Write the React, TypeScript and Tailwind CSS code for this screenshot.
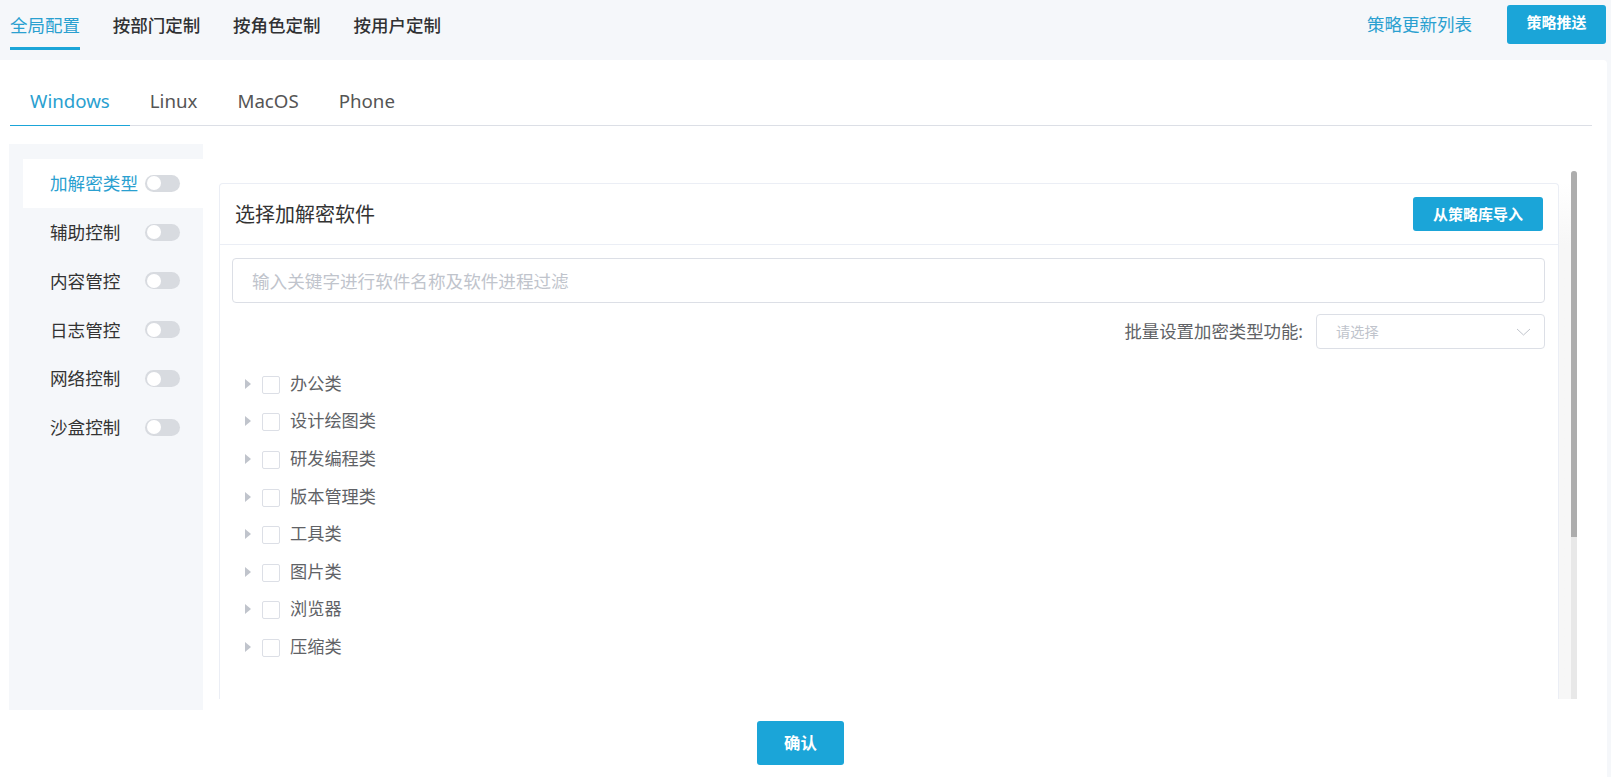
import React from "react";

const font = '"Noto Sans", "Noto Sans CJK SC", sans-serif';
const cats = ["办公类", "设计绘图类", "研发编程类", "版本管理类", "工具类", "图片类", "浏览器", "压缩类"];
const side = ["加解密类型", "辅助控制", "内容管控", "日志管控", "网络控制", "沙盒控制"];
const topTabs = ["全局配置", "按部门定制", "按角色定制", "按用户定制"];
const osTabs = ["Windows", "Linux", "MacOS", "Phone"];

function Toggle() {
  return (
    <span className="flex h-[17px] w-[35px] items-center rounded-full bg-[#d8dbe0] pl-[2px]">
      <span className="h-[14px] w-[14px] rounded-full bg-white" />
    </span>
  );
}

export default function App() {
  return (
    <div className="flex h-screen w-full flex-col overflow-hidden bg-[#f5f7fa]" style={{ fontFamily: font }}>
      <header className="flex h-[60px] shrink-0 items-start justify-between pl-[10px] pr-[5px]">
        <nav className="flex gap-[32.8px]">
          {topTabs.map((t, i) => (
            <div
              key={t}
              className={
                i === 0
                  ? "flex h-[50px] items-center border-b-[3px] border-[#1ba5d8] pt-[3px] text-[17.5px] text-[#2aa0d0]"
                  : "flex h-[50px] items-center border-b-[3px] border-transparent pt-[3px] text-[17.5px] font-medium text-[#303133]"
              }
            >
              {t}
            </div>
          ))}
        </nav>
        <div className="flex items-center gap-[35px] pt-[5px]">
          <span className="text-[17.5px] text-[#2aa0d0]">策略更新列表</span>
          <button className="flex h-[39px] w-[99px] items-center justify-center rounded-[3px] bg-[#1ba5d8] pb-[4px] text-[15px] font-bold text-white">
            策略推送
          </button>
        </div>
      </header>

      <main className="mr-[4px] flex min-h-0 flex-1 flex-col rounded-tr-[4px] bg-white">
        <div className="ml-[10px] mr-[15px] flex h-[66px] shrink-0 items-end border-b border-[#dcdfe6]">
          {osTabs.map((t, i) => (
            <div
              key={t}
              className={
                i === 0
                  ? "-mb-px flex h-[50px] items-center border-b-[1.5px] border-[#1ba5d8] px-[20px] pt-[1px] text-[18.7px] text-[#2aa0d0]"
                  : "-mb-px flex h-[50px] items-center border-b-[1.5px] border-transparent px-[20px] pt-[1px] text-[18.7px] text-[#555]"
              }
            >
              {t}
            </div>
          ))}
        </div>

        <div className="ml-[9px] mt-[18px] flex h-[566px] shrink-0 items-start">
          <aside className="h-full w-[194px] shrink-0 bg-[#f5f7fa] pl-[14px] pt-[15px]">
            {side.map((s, i) => (
              <div
                key={s}
                className={
                  i === 0
                    ? "flex h-[48.8px] items-center bg-white pl-[27px] text-[17.6px] text-[#2aa0d0]"
                    : "flex h-[48.8px] items-center pl-[27px] text-[17.6px] text-[#333]"
                }
              >
                <span className="w-[95px] shrink-0">{s}</span>
                <Toggle />
              </div>
            ))}
          </aside>

          <div className="ml-[16px] mt-[27px] flex h-[528px] min-w-0 flex-1 pr-[30px]">
            <section className="mt-[12px] w-[1340px] shrink-0 overflow-hidden rounded-t-[4px] border border-b-0 border-[#ebeef5]">
              <div className="flex h-[61px] items-center justify-between border-b border-[#ebeef5] pl-[15px] pr-[15px]">
                <h2 className="pt-[2px] text-[20px] font-normal text-[#333]">选择加解密软件</h2>
                <button className="flex h-[34px] w-[130px] items-center justify-center rounded-[3px] bg-[#1ba5d8] text-[15px] font-bold text-white">
                  从策略库导入
                </button>
              </div>
              <div className="pl-[12px] pr-[13px] pt-[13px]">
                <input
                  readOnly
                  placeholder="输入关键字进行软件名称及软件进程过滤"
                  className="h-[45px] w-full rounded-[4px] border border-[#dcdfe6] px-[19px] text-[17.6px] outline-none placeholder:text-[#c0c4cc]"
                />
                <div className="mt-[11px] flex items-center justify-end gap-[13px]">
                  <span className="text-[17.4px] text-[#606266]">批量设置加密类型功能:</span>
                  <div className="flex h-[35px] w-[229px] items-center justify-between rounded-[4px] border border-[#dcdfe6] pl-[19px] pr-[13px] text-[14.2px] text-[#c0c4cc]">
                    <span>请选择</span>
                    <svg width="15" height="8" viewBox="0 0 15 8" fill="none" stroke="#c0c4cc" strokeWidth="1">
                      <path d="M1 1l6.5 6 6.5-6" />
                    </svg>
                  </div>
                </div>
                <ul className="mt-[16px]">
                  {cats.map((c) => (
                    <li key={c} className="flex h-[37.6px] items-center pl-[13px]">
                      <svg width="6" height="10" viewBox="0 0 6 10" className="shrink-0">
                        <path d="M0 0l6 5-6 5z" fill="#c0c4cc" />
                      </svg>
                      <span className="ml-[11px] mt-[2px] h-[18px] w-[18px] shrink-0 rounded-[2px] border border-[#dcdfe6] bg-white" />
                      <span className="ml-[10px] text-[17.2px] text-[#606266]">{c}</span>
                    </li>
                  ))}
                </ul>
              </div>
            </section>
            <div className="mt-[12px] w-[12px] shrink-0 bg-linear-to-b from-white to-[#f7f7f7] to-[12%]" />
            <div className="h-full w-[6px] shrink-0 rounded-t-full bg-[#e8e8e8]">
              <div className="h-[366px] rounded-t-full bg-[#adadad]" />
            </div>
          </div>
        </div>

        <div className="flex flex-1 items-start justify-center pt-[11px]">
          <button className="-ml-[6px] flex h-[44px] w-[87px] items-center justify-center rounded-[3px] bg-[#1ba5d8] text-[16.4px] font-bold text-white">
            确认
          </button>
        </div>
      </main>
    </div>
  );
}
